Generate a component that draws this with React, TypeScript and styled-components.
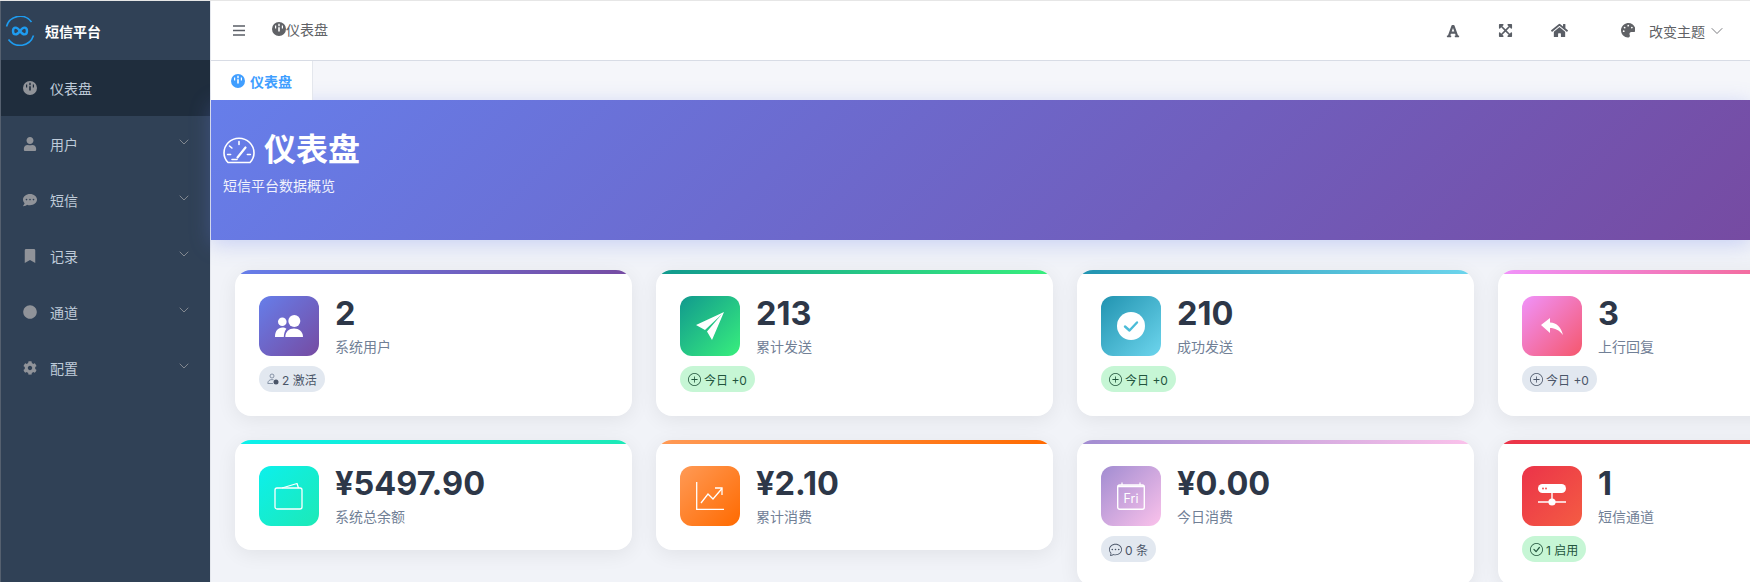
import React from 'react';
import styled, { createGlobalStyle } from 'styled-components';
import {
  FaUser,
  FaCommentDots,
  FaBookmark,
  FaCircle,
  FaCog,
  FaFont,
  FaExpandArrowsAlt,
  FaHome,
  FaPalette,
} from 'react-icons/fa';
import { BsPlusCircle, BsChatDots, BsCheckCircle } from 'react-icons/bs';
import { FiChevronDown } from 'react-icons/fi';

const GlobalStyle = createGlobalStyle`
  html, body {
    margin: 0;
    padding: 0;
    height: 100%;
    overflow: hidden;
    background: #f1f3f8;
    font-family: Inter, "Noto Sans CJK SC", "Liberation Sans", sans-serif;
  }
  * { box-sizing: border-box; }
`;

const Page = styled.div`
  display: flex;
  width: 1750px;
  height: 582px;
  overflow: hidden;
  border-top: 1px solid #e6e6e6;
`;

const Sidebar = styled.aside`
  flex: 0 0 210px;
  background: #304156;
  border-left: 1px solid #55606f;
`;

const Logo = styled.div`
  display: flex;
  align-items: center;
  gap: 10px;
  height: 59px;
  padding-left: 4px;
  color: #fff;
  font-size: 14px;
  font-weight: 700;
`;

const MenuItem = styled.div<{ $active?: boolean }>`
  display: flex;
  align-items: center;
  height: 56px;
  padding: 0 18px 0 22px;
  font-size: 14px;
  color: #bfcbd9;
  background: ${(p) => (p.$active ? '#1f2d3d' : 'transparent')};
`;

const MenuIcon = styled.span`
  display: flex;
  justify-content: center;
  width: 14px;
  margin-right: 13px;
  color: #909399;
  font-size: 14px;
`;

const MenuLabel = styled.span`
  flex: 1;
`;

const MenuArrow = styled.span`
  display: flex;
  margin-top: -4px;
  color: #909399;
`;

const Main = styled.main`
  flex: 1;
  min-width: 0;
  border-left: 1px solid #e4e7ed;
`;

const Header = styled.header`
  display: flex;
  align-items: center;
  height: 60px;
  padding: 0 23px 0 22px;
  background: #fff;
  border-bottom: 1px solid #d8dce5;
  color: #5a5e66;
`;

const Burger = styled.span`
  display: flex;
  margin-right: 27px;
`;

const Crumb = styled.div`
  display: flex;
  align-items: center;
  margin-top: -4px;
  flex: 1;
  font-size: 14px;
  color: #606266;
`;

const HeaderTool = styled.span`
  display: flex;
  margin-right: 38px;
`;

const ThemePicker = styled.div`
  display: flex;
  align-items: center;
  margin-left: 15px;
  font-size: 14px;
  color: #606266;
  gap: 14px;
`;

const ThemeLabel = styled.span`
  display: flex;
  align-items: center;
  gap: 2px;
`;

const Tabs = styled.nav`
  display: flex;
  height: 39px;
  background: #f5f6fa;
`;

const Tab = styled.div`
  display: flex;
  align-items: center;
  gap: 5px;
  padding: 0 20px;
  background: #fff;
  border-right: 1px solid #e4e7ed;
  color: #409eff;
  font-size: 14px;
  font-weight: 600;
`;

const Banner = styled.section`
  height: 140px;
  padding: 32px 12px 0;
  color: #fff;
  background: linear-gradient(135deg, #667eea 0%, #764ba2 100%);
  box-shadow: 0 4px 20px rgba(102, 126, 234, 0.3);
`;

const BannerTitle = styled.h1`
  display: flex;
  align-items: center;
  gap: 9px;
  margin: 0 0 8px;
  font-size: 32px;
  line-height: 36px;
  font-weight: 700;
`;

const BannerSub = styled.p`
  margin: 0;
  font-size: 14px;
  line-height: 20px;
  opacity: 0.9;
`;

const CardGrid = styled.div`
  display: grid;
  grid-template-columns: repeat(4, 397px);
  align-items: start;
  gap: 24px;
  padding: 30px 24px 0;
`;

const Card = styled.div<{ $gradient: string }>`
  position: relative;
  padding: 26px 24px 24px;
  background: #fff;
  border-radius: 16px;
  overflow: hidden;
  box-shadow: 0 4px 20px rgba(0, 0, 0, 0.07);
  &::before {
    content: '';
    position: absolute;
    top: 0;
    left: 0;
    right: 0;
    height: 4px;
    background: linear-gradient(90deg, ${(p) => p.$gradient});
  }
`;

const CardTop = styled.div`
  display: flex;
  gap: 16px;
`;

const IconBox = styled.div<{ $gradient: string }>`
  display: flex;
  align-items: center;
  justify-content: center;
  flex: 0 0 60px;
  height: 60px;
  border-radius: 12px;
  color: #fff;
  background: linear-gradient(135deg, ${(p) => p.$gradient});
`;

const CardValue = styled.div`
  font-size: 32.5px;
  line-height: 36px;
  font-weight: 700;
  color: #2d3748;
  margin-bottom: 6px;
`;

const CardLabel = styled.div`
  font-size: 14px;
  line-height: 18px;
  color: #718096;
`;

const Pill = styled.div<{ $green?: boolean }>`
  display: flex;
  align-items: center;
  gap: 3px;
  width: fit-content;
  height: 26px;
  margin-top: 10px;
  padding: 0 8px;
  border-radius: 13px;
  font-size: 12px;
  background: ${(p) => (p.$green ? '#c6f6d5' : '#e2e8f0')};
  color: ${(p) => (p.$green ? '#22543d' : '#4a5568')};
`;

const BurgerIcon = () => (
  <svg width="12" height="11" viewBox="0 0 12 11" stroke="currentColor" strokeWidth="1.3">
    <path d="M0 1 H12 M0 5.5 H12 M0 10 H12" />
  </svg>
);

// round dashboard glyph used in the menu, breadcrumb and tab
const DashDot = () => (
  <svg width="14" height="14" viewBox="0 0 14 14" fill="currentColor">
    <path
      fillRule="evenodd"
      d="M7 0 A7 7 0 1 1 7 14 A7 7 0 1 1 7 0 Z M6.3 1.8 V4.2 H7.7 V1.8 Z M6.2 5.2 V9.4 H7.8 V5.2 Z M3 3.6 V6.6 H4.2 V3.6 Z M9.8 3.6 V6.6 H11 V3.6 Z"
    />
  </svg>
);

const GaugeIcon = () => (
  <svg width="32" height="27" viewBox="0 0 32 27" fill="none" stroke="#fff" strokeWidth="1.6" strokeLinecap="round">
    <path d="M5 25.5 C2.6 23 1 19.6 1 16 C1 7.7 7.7 1.2 16 1.2 C24.3 1.2 31 7.7 31 16 C31 19.6 29.4 23 27 25.5 Z" />
    <path d="M16 4.5v3M6.5 9l2.4 2M4.6 17.5h3M24.4 17.5h3" />
    <path d="M14.5 20.5 L22.5 10.5" strokeWidth="2.2" />
    <path d="M9 22.5h5" />
  </svg>
);

const LogoMark = () => (
  <svg width="30" height="30" viewBox="0 0 30 30" fill="none" stroke="#1e9cf0">
    <path d="M26.5 6 A14.2 14.2 0 0 0 1.5 10.5" strokeWidth="1.6" />
    <path d="M3.5 23.5 A14.2 14.2 0 0 0 28.5 19.5" strokeWidth="1.6" />
    <path
      d="M15 15 C13 12.2 11.8 11.6 10.6 11.6 C9 11.6 8 13.2 8 15 C8 16.8 9 18.4 10.6 18.4 C11.8 18.4 13 17.8 15 15 C17 12.2 18.2 11.6 19.4 11.6 C21 11.6 22 13.2 22 15 C22 16.8 21 18.4 19.4 18.4 C18.2 18.4 17 17.8 15 15 Z"
      strokeWidth="2.4"
    />
  </svg>
);

const PeopleIcon = () => (
  <svg width="28" height="22" viewBox="0 0 28 22" fill="#fff">
    <circle cx="7.3" cy="6.7" r="4.3" />
    <circle cx="19.3" cy="6" r="6" />
    <path d="M0 22 C0 16 3 12.5 7.5 12.5 C9 12.5 10.4 13 11.4 13.7 C9.6 15.8 9 18.6 8.8 22 Z" />
    <path d="M10.3 22 C10.3 17 14 13.6 19 13.6 C24 13.6 28 17 28 22 Z" />
  </svg>
);

const PlaneIcon = () => (
  <svg width="28" height="28" viewBox="0 0 28 28" fill="#fff">
    <path d="M28 0 L0 13 L9 18 L26 2 L11 19.5 L16 28 Z" />
  </svg>
);

const CheckIcon = ({ color }: { color: string }) => (
  <svg width="28" height="28" viewBox="0 0 28 28">
    <circle cx="14" cy="14" r="14" fill="#fff" />
    <path d="M8 14.5 L12.5 18.5 L20 10.5" fill="none" stroke={color} strokeWidth="2.4" strokeLinecap="round" strokeLinejoin="round" />
  </svg>
);

const ReplyIcon = () => (
  <svg width="22" height="17" viewBox="0 0 22 17" fill="#fff">
    <path d="M0 7 L9 0 V4.5 C16 5 20 9 22 17 C18 12 14 10 9 10 V15 Z" />
  </svg>
);

const WalletIcon = () => (
  <svg width="30" height="28" viewBox="0 0 30 28" fill="none" stroke="#fff" strokeWidth="1.3" strokeLinejoin="round">
    <rect x="1" y="6" width="27" height="21" rx="2" />
    <path d="M8 6 L23 1.5 L24.5 6" />
  </svg>
);

const ChartIcon = () => (
  <svg width="28" height="28" viewBox="0 0 28 28" fill="none" stroke="#fff" strokeWidth="1.3">
    <path d="M0.7 0 V27.3 H28" />
    <path d="M5 21 L12 12 L17 17 L26 6.5" />
    <path d="M19 6 H26 V13" />
  </svg>
);

const CalendarText = styled.text`
  font-family: Inter, sans-serif;
  font-size: 12.5px;
  fill: #fff;
`;

const CalendarIcon = () => (
  <svg width="28" height="28" viewBox="0 0 28 28" fill="none" stroke="#fff" strokeWidth="1.4">
    <rect x="0.7" y="3" width="26.6" height="24.3" rx="2" />
    <path d="M5 0.5 V3 M23 0.5 V3" strokeWidth="1.2" />
    <path d="M1 4.4 H27" strokeWidth="1.6" />
    <CalendarText x="14" y="20.5" textAnchor="middle" stroke="none">Fri</CalendarText>
  </svg>
);

const NetworkIcon = ({ color }: { color: string }) => (
  <svg width="28" height="24" viewBox="0 0 28 24">
    <rect x="0" y="0" width="28" height="9" rx="4.5" fill="#fff" />
    <circle cx="5" cy="4.5" r="0.9" fill={color} />
    <circle cx="8" cy="4.5" r="0.9" fill={color} />
    <path d="M14 9 V18 M0 18 H28" stroke="#fff" strokeWidth="1.4" />
    <circle cx="14" cy="18" r="3.6" fill="#fff" />
  </svg>
);

const ActiveUserIcon = () => (
  <svg width="12" height="12" viewBox="0 0 12 12" fill="none" stroke="#718096" strokeWidth="0.8">
    <circle cx="5" cy="3" r="2" />
    <path d="M0.8 10.5 C0.8 7.8 2.6 6.6 5 6.6 C5.6 6.6 6 6.7 6.5 6.8" />
    <path d="M0.8 10.5 H6" />
    <circle cx="9" cy="9" r="2.5" fill="#4a5568" stroke="none" />
  </svg>
);

const menu = [
  { label: '用户', icon: <FaUser /> },
  { label: '短信', icon: <FaCommentDots /> },
  { label: '记录', icon: <FaBookmark /> },
  { label: '通道', icon: <FaCircle /> },
  { label: '配置', icon: <FaCog /> },
];

const cards = [
  {
    value: '2',
    label: '系统用户',
    gradient: '#667eea, #764ba2',
    icon: <PeopleIcon />,
    pill: { text: '2 激活', icon: <ActiveUserIcon /> },
  },
  {
    value: '213',
    label: '累计发送',
    gradient: '#11998e, #38ef7d',
    icon: <PlaneIcon />,
    pill: { text: '今日 +0', icon: <BsPlusCircle size={13} />, green: true },
  },
  {
    value: '210',
    label: '成功发送',
    gradient: '#2193b0, #6dd5ed',
    icon: <CheckIcon color="#4bbcd8" />,
    pill: { text: '今日 +0', icon: <BsPlusCircle size={13} />, green: true },
  },
  {
    value: '3',
    label: '上行回复',
    gradient: '#f093fb, #f5576c',
    icon: <ReplyIcon />,
    pill: { text: '今日 +0', icon: <BsPlusCircle size={13} /> },
  },
  {
    value: '¥5497.90',
    label: '系统总余额',
    gradient: '#0cf0ec, #1de9b6',
    icon: <WalletIcon />,
  },
  {
    value: '¥2.10',
    label: '累计消费',
    gradient: '#ff9a56, #ff6a00',
    icon: <ChartIcon />,
  },
  {
    value: '¥0.00',
    label: '今日消费',
    gradient: '#a18cd1, #fbc2eb',
    icon: <CalendarIcon />,
    pill: { text: '0 条', icon: <BsChatDots size={13} /> },
  },
  {
    value: '1',
    label: '短信通道',
    gradient: '#eb3349, #f45c43',
    icon: <NetworkIcon color="#ef4348" />,
    pill: { text: '1 启用', icon: <BsCheckCircle size={13} />, green: true },
  },
];

const App = () => (
  <>
    <GlobalStyle />
    <Page>
      <Sidebar>
        <Logo>
          <LogoMark />
          短信平台
        </Logo>
        <MenuItem $active>
          <MenuIcon><DashDot /></MenuIcon>
          <MenuLabel>仪表盘</MenuLabel>
        </MenuItem>
        {menu.map((item) => (
          <MenuItem key={item.label}>
            <MenuIcon>{item.icon}</MenuIcon>
            <MenuLabel>{item.label}</MenuLabel>
            <MenuArrow><FiChevronDown size={16} strokeWidth={1.3} /></MenuArrow>
          </MenuItem>
        ))}
      </Sidebar>
      <Main>
        <Header>
          <Burger><BurgerIcon /></Burger>
          <Crumb>
            <DashDot />
            仪表盘
          </Crumb>
          <HeaderTool><FaFont size={14} /></HeaderTool>
          <HeaderTool><FaExpandArrowsAlt size={15} /></HeaderTool>
          <HeaderTool><FaHome size={17} /></HeaderTool>
          <ThemePicker>
            <FaPalette size={14.5} />
            <ThemeLabel>
              改变主题
              <FiChevronDown size={20} strokeWidth={1} />
            </ThemeLabel>
          </ThemePicker>
        </Header>
        <Tabs>
          <Tab>
            <DashDot />
            仪表盘
          </Tab>
        </Tabs>
        <Banner>
          <BannerTitle>
            <GaugeIcon />
            仪表盘
          </BannerTitle>
          <BannerSub>短信平台数据概览</BannerSub>
        </Banner>
        <CardGrid>
          {cards.map((card) => (
            <Card key={card.label} $gradient={card.gradient}>
              <CardTop>
                <IconBox $gradient={card.gradient}>{card.icon}</IconBox>
                <div>
                  <CardValue>{card.value}</CardValue>
                  <CardLabel>{card.label}</CardLabel>
                </div>
              </CardTop>
              {card.pill && (
                <Pill $green={card.pill.green}>
                  {card.pill.icon}
                  {card.pill.text}
                </Pill>
              )}
            </Card>
          ))}
        </CardGrid>
      </Main>
    </Page>
  </>
);

export default App;
